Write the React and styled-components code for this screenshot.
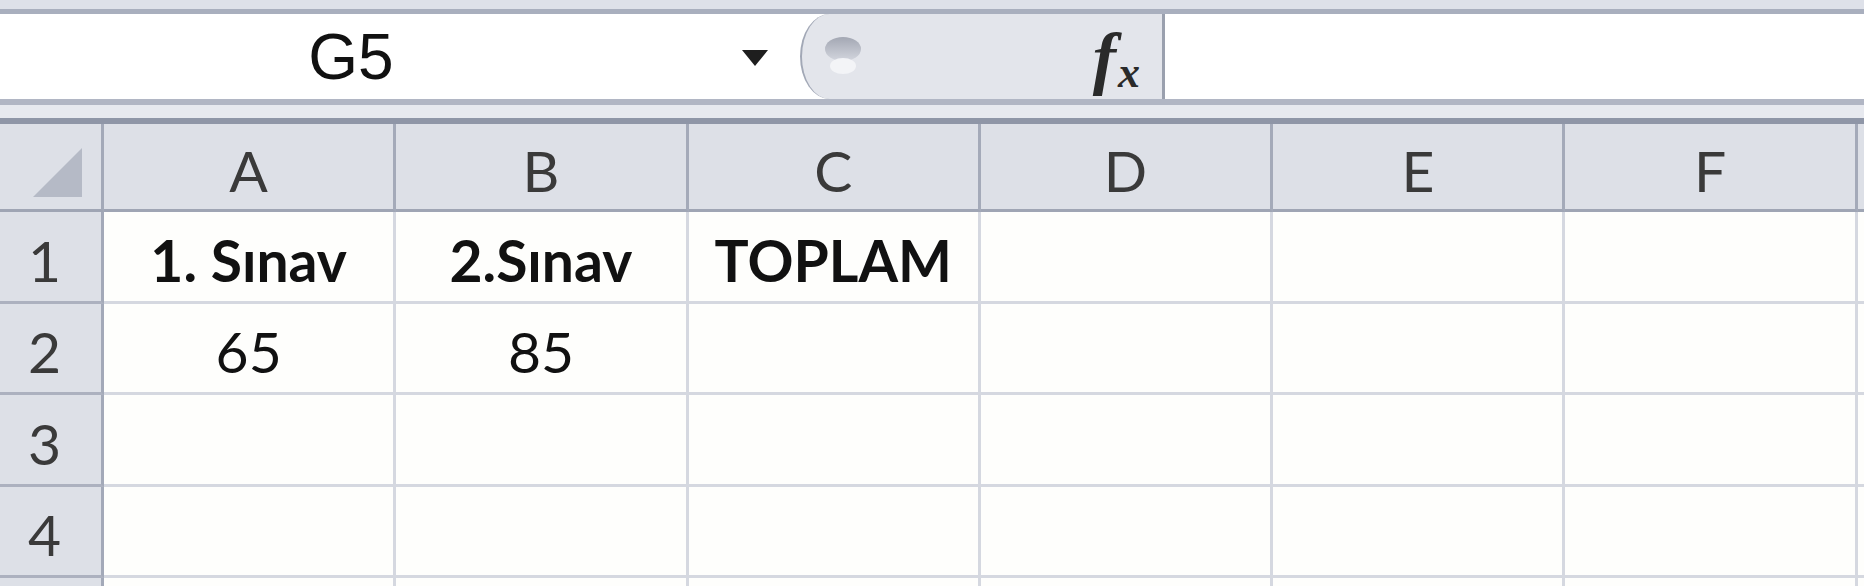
import React from 'react';
import styled, { createGlobalStyle } from 'styled-components';

const GlobalStyle = createGlobalStyle`
  html, body {
    margin: 0;
    padding: 0;
    background: #ffffff;
    overflow: hidden;
  }
  body {
    font-family: Lato, 'Liberation Sans', sans-serif;
  }
`;

const columns = ['A', 'B', 'C', 'D', 'E', 'F', ''];

// row 5 is only a sliver at the bottom edge, its label is out of view
const rows = [
  { n: 1, bold: true, cells: ['1. Sınav', '2.Sınav', 'TOPLAM'] },
  { n: 2, cells: ['65', '85'] },
  { n: 3, cells: [] },
  { n: 4, cells: [] },
  { n: '', cells: [] },
];

const App = () => {
  return (
    <Page>
      <GlobalStyle />
      <TopStrip />
      <FormulaBar>
        <NameBox>
          <NameText>G5</NameText>
          <DropArrow viewBox="0 0 26 16">
            <polygon points="0,0 26,0 13,16" fill="#1e1e1e" />
          </DropArrow>
        </NameBox>
        <Splitter>
          <svg width="40" height="44" viewBox="0 0 40 44">
            <defs>
              <linearGradient id="dome" x1="0" y1="0" x2="0" y2="1">
                <stop offset="0" stopColor="#a3a7b3" />
                <stop offset="1" stopColor="#d3d6de" />
              </linearGradient>
            </defs>
            <ellipse cx="20" cy="14" rx="18" ry="12" fill="url(#dome)" />
            <ellipse cx="20" cy="31" rx="13" ry="8" fill="#f3f4f7" />
          </svg>
          <FxLabel>
            f<FxSub>x</FxSub>
          </FxLabel>
        </Splitter>
        <FormulaInput />
      </FormulaBar>
      <Band />
      <Sheet>
        <Corner>
          <svg width="49" height="49" viewBox="0 0 49 49">
            <polygon points="49,0 49,49 0,49" fill="#b5bac6" />
          </svg>
        </Corner>
        {columns.map((c, i) => (
          <ColHead key={'h' + i}>{c}</ColHead>
        ))}
        {rows.map((r, ri) => (
          <React.Fragment key={ri}>
            <RowHead>{r.n}</RowHead>
            {columns.map((c, i) => (
              <Cell key={ri + '-' + i} $bold={r.bold}>
                {r.cells[i] || ''}
              </Cell>
            ))}
          </React.Fragment>
        ))}
      </Sheet>
    </Page>
  );
};

const Page = styled.div`
  width: 1864px;
  height: 586px;
  overflow: hidden;
  display: flex;
  flex-direction: column;
`;

const TopStrip = styled.div`
  height: 9px;
  flex: 0 0 9px;
  background: #dee1e9;
`;

const FormulaBar = styled.div`
  display: flex;
  height: 85px;
  flex: 0 0 85px;
  border-top: 5px solid #a9afbe;
  border-bottom: 6px solid #b1b6c4;
  background: #ffffff;
`;

const NameBox = styled.div`
  flex: 0 0 800px;
  display: flex;
  align-items: center;
  background: #ffffff;
`;

const NameText = styled.div`
  width: 702px;
  text-align: center;
  font-family: 'Liberation Sans', Arial, sans-serif;
  font-size: 64px;
  line-height: 1;
  color: #111111;
`;

const DropArrow = styled.svg`
  width: 26px;
  height: 16px;
  margin-left: 40px;
  margin-top: 2px;
`;

const Splitter = styled.div`
  flex: 0 0 365px;
  box-sizing: border-box;
  display: flex;
  align-items: center;
  justify-content: space-between;
  padding: 0 22px 0 21px;
  background: #e3e5eb;
  border-left: 2px solid #a2a8b6;
  border-right: 3px solid #9aa0ae;
  border-top-left-radius: 30px 43px;
  border-bottom-left-radius: 30px 43px;
`;

const FxLabel = styled.div`
  display: flex;
  align-items: baseline;
  font-family: 'Liberation Serif', 'Times New Roman', serif;
  font-style: italic;
  font-weight: 700;
  font-size: 70px;
  line-height: 1;
  color: #2a2a2a;
  margin-top: 2px;
`;

const FxSub = styled.span`
  font-size: 44px;
  position: relative;
  top: 6px;
  margin-left: 2px;
`;

const FormulaInput = styled.div`
  flex: 1;
  background: #ffffff;
`;

const Band = styled.div`
  height: 13px;
  flex: 0 0 13px;
  background: #e7e9ef;
  border-bottom: 6px solid #8f96a7;
`;

const Sheet = styled.div`
  flex: 1;
  display: grid;
  grid-template-columns: 104px repeat(7, 292.3px);
  grid-template-rows: 88px repeat(5, 91.5px);
  overflow: hidden;
  font-size: 57px;
  line-height: 1;
`;

const Corner = styled.div`
  box-sizing: border-box;
  display: flex;
  align-items: flex-end;
  justify-content: flex-end;
  padding: 0 19px 12px 0;
  background: #dde0e7;
  border-right: 3px solid #a3a9b8;
  border-bottom: 3px solid #9fa5b4;
`;

const ColHead = styled.div`
  box-sizing: border-box;
  display: flex;
  align-items: flex-end;
  justify-content: center;
  padding-bottom: 10px;
  background: #dde0e7;
  border-right: 3px solid #a4aab9;
  border-bottom: 3px solid #9fa5b4;
  color: #3a3a3a;
`;

const RowHead = styled.div`
  box-sizing: border-box;
  display: flex;
  align-items: flex-end;
  justify-content: center;
  padding: 0 12px 12px 0;
  background: #dde0e7;
  border-right: 3px solid #a3a9b8;
  border-bottom: 3px solid #acb1bf;
  color: #3a3a3a;
`;

const Cell = styled.div`
  box-sizing: border-box;
  display: flex;
  align-items: flex-end;
  justify-content: center;
  padding-bottom: 12px;
  background: #fefefc;
  border-right: 3px solid #d5d8e0;
  border-bottom: 3px solid #d5d8e0;
  font-weight: ${(p) => (p.$bold ? 700 : 400)};
  color: #111111;
  white-space: nowrap;
  overflow: hidden;
`;

export default App;
